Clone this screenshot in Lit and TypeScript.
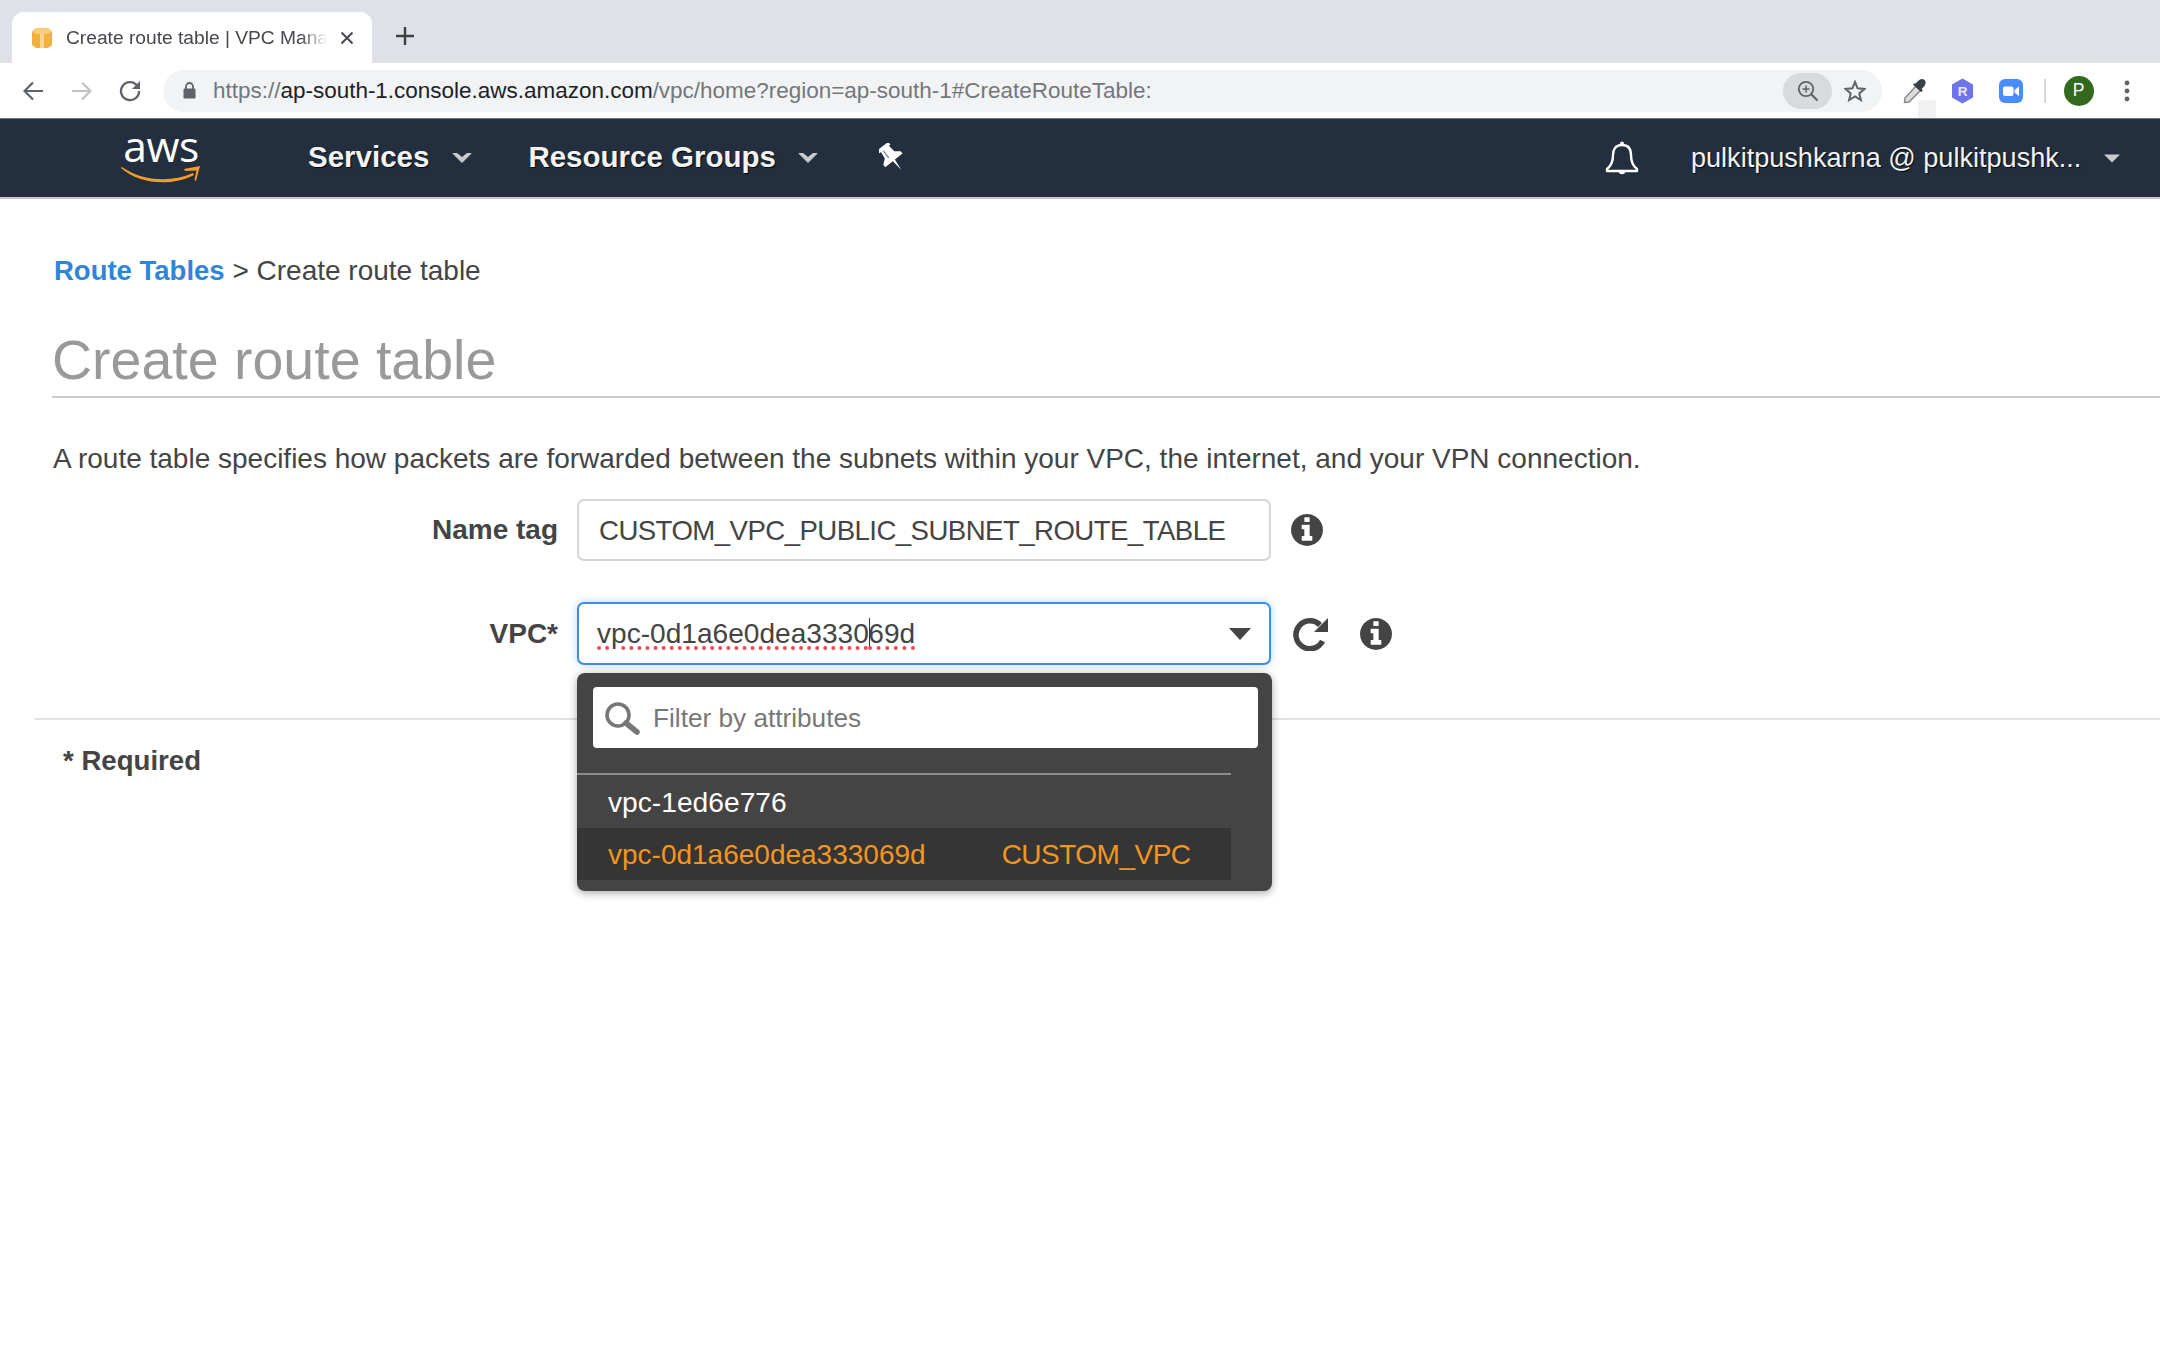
import { LitElement, html, css } from "lit";
import { customElement } from "lit/decorators.js";

const INFO = "M1024 1248v-160q0-14-9-23t-23-9h-96v-512q0-14-9-23t-23-9h-320q-14 0-23 9t-9 23v160q0 14 9 23t23 9h96v320h-96q-14 0-23 9t-9 23v160q0 14 9 23t23 9h448q14 0 23-9t9-23zm-128-896v-160q0-14-9-23t-23-9h-192q-14 0-23 9t-9 23v160q0 14 9 23t23 9h192q14 0 23-9t9-23zm640 416q0 209-103 385.5t-279.5 279.5-385.5 103-385.5-103-279.5-279.5-103-385.5 103-385.5 279.5-279.5 385.5-103 385.5 103 279.5 279.5 103 385.5z";

const infoIcon = html`<svg class="info" viewBox="0 0 1536 1536"><path fill="#444" d="${INFO}"></path></svg>`;
const chevron = html`<svg class="chev" viewBox="0 0 20 12"><path d="M1 1.5 L10 10.5 L19 1.5 L15 1.5 L10 5.5 L5 1.5 Z" fill="#c9cbce" stroke="#c9cbce" stroke-width="1"></path></svg>`;

@customElement("app-root")
export class AppRoot extends LitElement {
  static styles = css`
    :host { display: block; width: 2160px; height: 1350px; background: #fff; overflow: hidden; font-family: "Liberation Sans", Arial, sans-serif; color: #444; }
    svg { display: block; flex: none; }

    .strip { height: 63px; background: #dee1e6; display: flex; align-items: flex-end; padding-left: 12px; box-sizing: border-box; }
    .tab { width: 360px; height: 51px; background: #fff; border-radius: 12px 12px 0 0; display: flex; align-items: center; padding-left: 19px; box-sizing: border-box; }
    .tab-title { margin-left: 13px; width: 261px; overflow: hidden; white-space: nowrap; font-size: 19.2px; color: #45484d; -webkit-mask-image: linear-gradient(90deg, #000 90%, transparent 100%); mask-image: linear-gradient(90deg, #000 90%, transparent 100%); }
    .tab-close { margin-left: 13px; }
    .newtab { margin: 0 0 17px 23px; }

    .toolbar { height: 55px; background: #fff; display: flex; align-items: center; padding-left: 23px; box-sizing: border-box; }
    .nav-fwd { margin-left: 27px; }
    .nav-rel { margin-left: 27px; }
    .url { margin-left: 22px; width: 1719px; height: 42px; border-radius: 21px; background: #f1f3f4; display: flex; align-items: center; box-sizing: border-box; padding-left: 20px; }
    .url-text { margin-left: 17px; font-size: 22.47px; color: #73777c; white-space: nowrap; flex: 1; }
    .url-text b { font-weight: 400; color: #202124; }
    .zoom-btn { width: 49px; height: 36px; border-radius: 18px; background: #d8dadb; display: flex; align-items: center; justify-content: center; }
    .star { margin: 0 16px 0 12px; }
    .ext { display: flex; align-items: center; }
    .dropper { margin-left: 21px; position: relative; }
    .dropper i { position: absolute; left: 15px; top: 22px; width: 18px; height: 18px; background: #f1f1f1; border-radius: 2px; }
    .rext { margin-left: 24px; }
    .zext { margin-left: 25px; }
    .sep { width: 1.5px; height: 24px; background: #d5d6d7; margin-left: 21px; }
    .avatar { margin-left: 18px; width: 30px; height: 30px; border-radius: 50%; background: #33691e; color: #fff; display: flex; align-items: center; justify-content: center; font-size: 17.5px; }
    .kebab { margin-left: 30px; }

    .navbar { height: 81px; background: #232f3e; border-top: 1px solid #6f7780; border-bottom: 2px solid #c6c8cb; box-sizing: border-box; display: flex; align-items: center; padding-left: 120px; color: #fff; }
    .logo { width: 82px; height: 62px; display: flex; flex-direction: column; align-items: center; margin-top: -3px; }
    .logo span { font-family: "Open Sans", "Liberation Sans", sans-serif; font-size: 42.5px; line-height: 40px; height: 38px; letter-spacing: -0.5px; font-weight: 400; color: #fff; }
    .menu { font-size: 29.5px; font-weight: 700; white-space: nowrap; text-shadow: 1px 1px 1px rgba(0,0,0,.8); color: #f2f3f3; margin-top: -2px; }
    .m1 { margin-left: 106px; }
    .m2 { margin-left: 56px; }
    .chev { width: 20px; height: 12px; }
    .c1 { margin-left: 23px; }
    .c2 { margin-left: 22px; }
    .pin { margin-left: 61px; }
    .bell { margin-left: 700px; }
    .user { margin-left: 52px; width: 392px; font-size: 27.1px; white-space: nowrap; color: #f2f3f3; text-shadow: 1px 1px 1px rgba(0,0,0,.8); }
    .ucaret { margin-left: 21px; }

    .main { display: flex; flex-direction: column; }
    .crumb { margin: 56px 0 0 54px; font-size: 28px; line-height: 32px; color: #444; }
    .crumb a { color: #2e86d8; font-weight: 700; font-size: 27.5px; text-decoration: none; }
    h1 { margin: 38px 0 0 52px; font-size: 55.5px; line-height: 70px; height: 71px; font-weight: 400; color: #999; border-bottom: 2px solid #ccc; box-sizing: content-box; }
    .desc { margin: 45px 0 0 53px; font-size: 28px; line-height: 32px; color: #444; white-space: nowrap; }
    .form { margin: 24px 0 0 52px; display: flex; flex-direction: column; gap: 41px; }
    .row { display: flex; align-items: center; }
    .lbl { width: 506px; text-align: right; font-weight: 700; font-size: 28px; color: #444; margin-right: 19px; }
    .field { position: relative; width: 694px; height: 62px; box-sizing: border-box; border: 2px solid #d5d5d5; border-radius: 7px; display: flex; align-items: center; font-size: 27.6px; letter-spacing: -0.55px; color: #444; padding: 2px 0 0 20px; white-space: nowrap; }
    .field.focus { border-color: #3b8ee0; height: 63px; padding: 0 0 0 18px; font-size: 28.1px; letter-spacing: 0; box-shadow: 0 0 8px rgba(90,165,235,.45); }
    .squig { text-decoration: underline dotted #ee4a55 4px; text-underline-offset: 4px; }
    .caret { display: inline-block; width: 0; height: 30px; border-left: 1.5px solid #333; vertical-align: -5px; margin-right: -1.5px; }
    .tri { margin-left: auto; margin-right: 18px; width: 0; height: 0; border-left: 11px solid transparent; border-right: 11px solid transparent; border-top: 12px solid #444; }
    .info { width: 32px; height: 32px; }
    .info-a { margin-left: 20px; }
    .refresh { width: 35px; height: 35px; margin-left: 22px; }
    .info-b { margin-left: 32px; }

    .popup { position: absolute; left: -2px; top: 69px; width: 695px; height: 218px; box-sizing: border-box; background: #444; border-radius: 8px; box-shadow: 0 2px 8px rgba(0,0,0,.35); z-index: 2; padding-top: 14px; display: flex; flex-direction: column; }
    .filter { margin-left: 16px; width: 665px; height: 61px; background: #fff; border-radius: 4px; display: flex; align-items: center; padding: 1px 0 0 11px; box-sizing: border-box; color: #777; font-size: 26.2px; letter-spacing: 0; }
    .filter span { margin-left: 13px; }
    .list { margin-top: 25px; width: 654px; border-top: 2px solid #8c8c8c; display: flex; flex-direction: column; }
    .opt { height: 52px; display: flex; align-items: center; padding: 1px 0 0 31px; font-size: 28px; color: #fff; box-sizing: border-box; }
    .opt.sel { background: #353535; color: #f4951f; }
    .opt.plain { height: 53px; font-size: 28.2px; }
    .opt .name { margin-left: 76px; letter-spacing: -0.5px; }

    .rule { margin: 53px 0 0 34px; height: 2px; background: #e2e2e2; }
    .req { margin: 25px 0 0 63px; font-size: 27.6px; line-height: 32px; font-weight: 700; color: #444; }
  `;

  render() {
    return html`
      <div class="strip">
        <div class="tab">
          <svg width="22" height="22" viewBox="0 0 22 22">
            <path d="M1 4.5 L5 1 H17 L21 4.5 V18 L17 21 H5 L1 18 Z" fill="#f2b13c"></path>
            <path d="M1 4.5 L5 1 H17 L21 4.5 L16 7 H6 Z" fill="#f7cd7c"></path>
            <path d="M9 7 H13 V21 H9 Z" fill="#f8d48e"></path>
          </svg>
          <div class="tab-title">Create route table | VPC Manag</div>
          <svg class="tab-close" width="14" height="14" viewBox="0 0 14 14"><path d="M1.5 1.5 L12.5 12.5 M12.5 1.5 L1.5 12.5" stroke="#45484d" stroke-width="2"></path></svg>
        </div>
        <svg class="newtab" width="20" height="20" viewBox="0 0 20 20"><path d="M10 1 V19 M1 10 H19" stroke="#3c4043" stroke-width="2.4"></path></svg>
      </div>

      <div class="toolbar">
        <svg width="21" height="20" viewBox="0 0 21 20"><path d="M20 10 H2 M10 1.5 L1.5 10 L10 18.5" fill="none" stroke="#5f6368" stroke-width="2.2"></path></svg>
        <svg class="nav-fwd" width="21" height="20" viewBox="0 0 21 20"><path d="M1 10 H19 M11 1.5 L19.5 10 L11 18.5" fill="none" stroke="#bfc1c4" stroke-width="2.2"></path></svg>
        <svg class="nav-rel" width="22" height="22" viewBox="0 0 22 22"><path d="M18.4 6 A9 9 0 1 0 20 11" fill="none" stroke="#5f6368" stroke-width="2.3"></path><path d="M21 1 V9 H13 Z" fill="#5f6368"></path></svg>
        <div class="url">
          <svg width="13" height="17" viewBox="0 0 13 17"><path d="M3 7 V4.5 A3.5 3.5 0 0 1 10 4.5 V7" fill="none" stroke="#5f6368" stroke-width="1.8"></path><rect x="0.5" y="6.5" width="12" height="10" rx="1.2" fill="#5f6368"></rect></svg>
          <div class="url-text">https://<b>ap-south-1.console.aws.amazon.com</b>/vpc/home?region=ap-south-1#CreateRouteTable:</div>
          <div class="zoom-btn">
            <svg width="22" height="22" viewBox="0 0 22 22"><circle cx="9" cy="9" r="7.2" fill="none" stroke="#5f6368" stroke-width="1.8"></circle><path d="M14.2 14.2 L20.5 20.5" stroke="#5f6368" stroke-width="2.2"></path><path d="M9 5.5 V12.5 M5.5 9 H12.5" stroke="#5f6368" stroke-width="1.5"></path></svg>
          </div>
          <svg class="star" width="22" height="22" viewBox="0 0 22 22"><path d="M11 2 L13.6 8.3 L20.5 8.9 L15.3 13.4 L16.9 20.1 L11 16.5 L5.1 20.1 L6.7 13.4 L1.5 8.9 L8.4 8.3 Z" fill="none" stroke="#5f6368" stroke-width="2"></path></svg>
        </div>
        <div class="ext">
          <div class="dropper">
            <svg width="24" height="26" viewBox="0 0 24 26">
              <path d="M1.5 24.5 L2 20 L13 8 L17.5 12.5 L6 24 Z" fill="#dcdcdc" stroke="#8a8a8a" stroke-width="1.5"></path>
              <path d="M12 6 L15 3 Q18 0 21 1.5 Q24 4 21.5 8 L18.5 11 L20 12.5 L18 14 L10 6.5 L11.5 5 Z" fill="#3a3f45"></path>
            </svg>
            <i></i>
          </div>
          <svg class="rext" width="23" height="26" viewBox="0 0 23 26">
            <path d="M11.5 0.5 L22 6.5 V19.5 L11.5 25.5 L1 19.5 V6.5 Z" fill="#6f74e8"></path>
            <text x="11.5" y="18" text-anchor="middle" font-family="Liberation Sans, sans-serif" font-weight="700" font-size="13.5" fill="#e8e9ff">R</text>
          </svg>
          <svg class="zext" width="24" height="24" viewBox="0 0 24 24">
            <rect width="24" height="24" rx="6" fill="#4a8cff"></rect>
            <rect x="4" y="7.5" width="10.5" height="9.5" rx="2" fill="#fff"></rect>
            <path d="M15.5 11 L20 7.5 V17 L15.5 13.5 Z" fill="#fff"></path>
          </svg>
          <div class="sep"></div>
          <div class="avatar">P</div>
          <svg class="kebab" width="6" height="22" viewBox="0 0 6 22"><circle cx="3" cy="3" r="2.4" fill="#5f6368"></circle><circle cx="3" cy="11" r="2.4" fill="#5f6368"></circle><circle cx="3" cy="19" r="2.4" fill="#5f6368"></circle></svg>
        </div>
      </div>

      <div class="navbar">
        <div class="logo">
          <span>aws</span>
          <svg width="80" height="20" viewBox="0 0 80 20">
            <path d="M1 3 C 20 17, 50 19, 72 9 L73 11 C 50 23, 18 20, 0 4 Z" fill="#f79c24"></path>
            <path d="M63 5 L79 2 L75 17 L73.5 16 L75.5 6.5 L64 7 Z" fill="#f79c24"></path>
          </svg>
        </div>
        <div class="menu m1">Services</div>
        <div class="c1">${chevron}</div>
        <div class="menu m2">Resource Groups</div>
        <div class="c2">${chevron}</div>
        <svg class="pin" width="26" height="30" viewBox="0 0 26 30">
          <g transform="rotate(-38 13 15)">
            <path d="M6 0 H20 V3.5 H18 L19 11 L24 15 V18 H14.3 L13 30 L11.7 18 H2 V15 L7 11 L8 3.5 H6 Z" fill="#fff"></path>
            <path d="M10.5 4 V13" stroke="#8d949c" stroke-width="1.6"></path>
          </g>
        </svg>
        <svg class="bell" width="34" height="35" viewBox="0 0 34 35">
          <path d="M17 4 C 10 4 8 9 8 14 C 8 21 6 25 2 28 V30 H32 V28 C 28 25 26 21 26 14 C 26 9 24 4 17 4 Z" fill="none" stroke="#fff" stroke-width="2.4" stroke-linejoin="round"></path>
          <circle cx="17" cy="2.5" r="2" fill="#fff"></circle>
          <path d="M13.5 31 A3.8 3.8 0 0 0 20.5 31 Z" fill="#fff"></path>
        </svg>
        <div class="user">pulkitpushkarna @ pulkitpushk...</div>
        <svg class="ucaret" width="16" height="9" viewBox="0 0 16 9"><path d="M0 0.5 H16 L8 8.5 Z" fill="#c9cbce"></path></svg>
      </div>

      <div class="main">
        <div class="crumb"><a href="#">Route Tables</a> &gt; Create route table</div>
        <h1>Create route table</h1>
        <div class="desc">A route table specifies how packets are forwarded between the subnets within your VPC, the internet, and your VPN connection.</div>
        <div class="form">
          <div class="row">
            <div class="lbl">Name tag</div>
            <div class="field">CUSTOM_VPC_PUBLIC_SUBNET_ROUTE_TABLE</div>
            <div class="info-a">${infoIcon}</div>
          </div>
          <div class="row">
            <div class="lbl">VPC*</div>
            <div class="field focus">
              <span class="squig">vpc-0d1a6e0dea3330<span class="caret"></span>69d</span>
              <div class="tri"></div>
              <div class="popup">
                <div class="filter">
                  <svg width="36" height="34" viewBox="0 0 36 34"><circle cx="14" cy="14" r="11" fill="none" stroke="#777" stroke-width="3.6"></circle><path d="M22 22 L33 31" stroke="#777" stroke-width="5.5" stroke-linecap="round"></path></svg>
                  <span>Filter by attributes</span>
                </div>
                <div class="list">
                  <div class="opt plain">vpc-1ed6e776</div>
                  <div class="opt sel">vpc-0d1a6e0dea333069d<span class="name">CUSTOM_VPC</span></div>
                </div>
              </div>
            </div>
            <svg class="refresh" viewBox="0 0 35 35"><path d="M27 9 A14 14 0 1 0 29.5 25" fill="none" stroke="#444" stroke-width="5.5"></path><path d="M35 2 V16 H21 Z" fill="#444"></path></svg>
            <div class="info-b">${infoIcon}</div>
          </div>
        </div>
        <div class="rule"></div>
        <div class="req">* Required</div>
      </div>
    `;
  }
}
